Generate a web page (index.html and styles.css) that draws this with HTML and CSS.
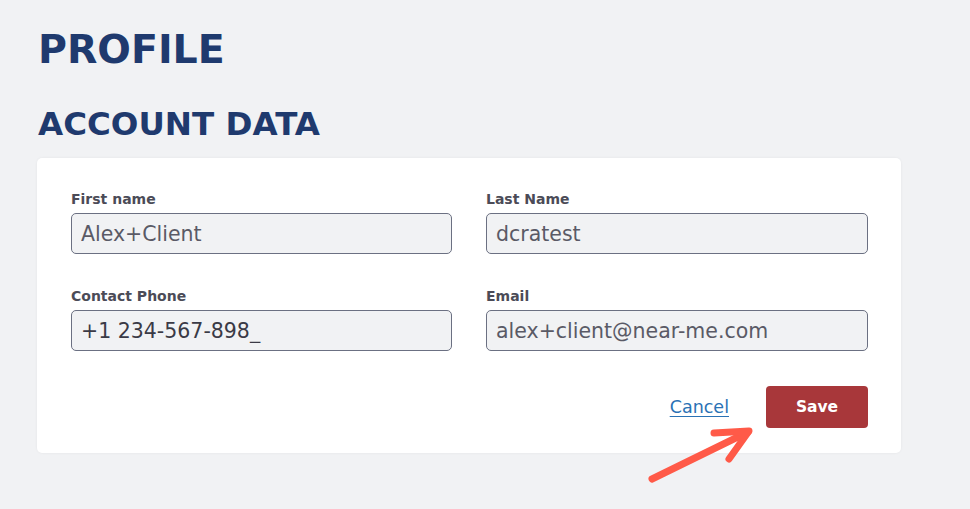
FILE: index.html
```html
<!DOCTYPE html>
<html>
<head>
<meta charset="utf-8">
<link rel="stylesheet" href="styles.css">
</head>
<body>
<main class="page">
  <h1 class="title">PROFILE</h1>
  <h2 class="subtitle">ACCOUNT DATA</h2>
  <section class="card">
    <form class="form">
      <div class="grid">
        <label class="field">
          <span class="label">First name</span>
          <input class="input" type="text" value="Alex+Client">
        </label>
        <label class="field">
          <span class="label">Last Name</span>
          <input class="input" type="text" value="dcratest">
        </label>
        <label class="field">
          <span class="label">Contact Phone</span>
          <input class="input input-dark" type="text" value="+1 234-567-898_">
        </label>
        <label class="field">
          <span class="label">Email</span>
          <input class="input" type="text" value="alex+client@near-me.com">
        </label>
      </div>
      <div class="actions">
        <a class="cancel" href="#">Cancel</a>
        <button class="save" type="button">Save</button>
      </div>
    </form>
  </section>
  <svg class="arrow" width="120" height="70" viewBox="0 0 120 70">
    <g fill="none" stroke="#ff5a48" stroke-width="7" stroke-linecap="round" stroke-linejoin="round">
      <path d="M12 59 L108 12"/>
      <path d="M74 13 L109 11 L89 39"/>
    </g>
  </svg>
</main>
</body>
</html>
```
FILE: styles.css
```css
* { box-sizing: border-box; }
html, body { margin: 0; padding: 0; }
body {
  background: #f1f2f4;
  font-family: "DejaVu Sans", "Open Sans", sans-serif;
  width: 970px;
  height: 509px;
  overflow: hidden;
}
.page {
  position: relative;
  padding: 26px 69px 0 37px;
}
.title {
  margin: 0 0 0 1px;
  font-size: 39.5px;
  line-height: 46px;
  font-weight: 700;
  color: #1f3a6e;
}
.subtitle {
  margin: 32px 0 0 1px;
  font-size: 32.5px;
  line-height: 40px;
  font-weight: 700;
  color: #1f3a6e;
}
.card {
  margin-top: 14px;
  background: #fff;
  border-radius: 5px;
  box-shadow: 0 0 3px rgba(0,0,0,0.06);
  padding: 33px 33px 25px 34px;
}
.grid {
  display: grid;
  grid-template-columns: 381px 382px;
  column-gap: 34px;
  row-gap: 34px;
}
.field { display: flex; flex-direction: column; }
.label {
  font-size: 14px;
  line-height: 16px;
  font-weight: 700;
  color: #4b4b57;
  margin-bottom: 6px;
}
.input {
  height: 41px;
  border: 1px solid #6b7082;
  border-radius: 5px;
  background: #f1f2f4;
  padding: 0 9px;
  font-family: "DejaVu Sans", "Open Sans", sans-serif;
  font-size: 20.5px;
  color: #5a5a66;
  outline: none;
  width: 100%;
}
.input-dark { color: #3a3a46; }
.actions {
  display: flex;
  justify-content: flex-end;
  align-items: center;
  margin-top: 35px;
  gap: 37px;
}
.cancel {
  font-size: 17.5px;
  color: #2a72b5;
  text-decoration: underline;
  text-underline-offset: 3px;
}
.save {
  width: 102px;
  height: 42px;
  border: none;
  border-radius: 4px;
  background: #a8373a;
  color: #fff;
  font-family: "DejaVu Sans", "Open Sans", sans-serif;
  font-weight: 700;
  font-size: 15.5px;
}
.arrow {
  position: absolute;
  left: 640px;
  top: 420px;
}
```
